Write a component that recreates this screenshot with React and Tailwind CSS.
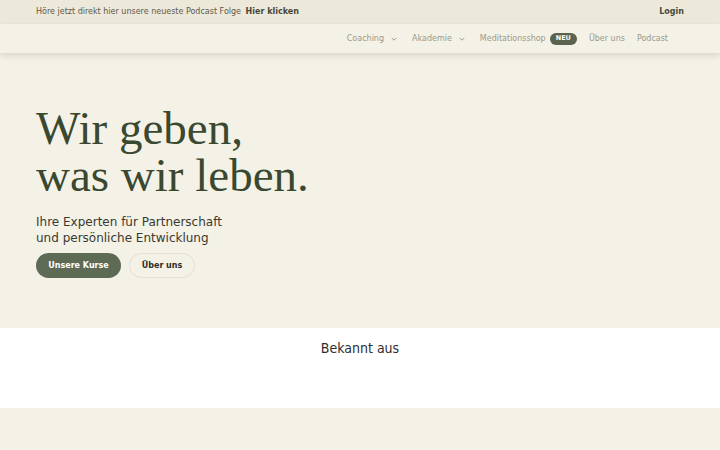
import React from "react";

const sans = { fontFamily: '"DejaVu Sans", sans-serif' };

function Chevron() {
  return (
    <svg width="8" height="8" viewBox="0 0 10 10" className="ml-1.5 mr-0.5" fill="none" stroke="currentColor" strokeWidth="1.2" strokeLinecap="round" strokeLinejoin="round">
      <path d="M2.5 4 L5 6.5 L7.5 4" />
    </svg>
  );
}

function TopBar() {
  return (
    <div className="h-6 bg-[#ece8da] flex items-center justify-between pl-9 pr-9 text-[8px]" style={sans}>
      <div className="text-[#5c5a4e]">
        Höre jetzt direkt hier unsere neueste Podcast Folge <span className="font-bold text-[#4a483c] ml-0.5">Hier klicken</span>
      </div>
      <div className="font-bold text-[#4a483c]">Login</div>
    </div>
  );
}

function NavBar() {
  return (
    <div className="relative z-10 h-[29px] bg-[#f4f1e6] flex items-center justify-end pr-[52px] shadow-[0_3px_6px_rgba(120,110,80,0.18)] text-[8px] text-[#9c9a88]" style={sans}>
      <div className="flex items-center gap-3">
        <div className="flex items-center">Coaching<Chevron /></div>
        <div className="flex items-center">Akademie<Chevron /></div>
        <div className="flex items-center">
          Meditationsshop
          <span className="ml-1 h-3 px-1.5 rounded-full bg-[#5b634f] text-white font-bold text-[6.5px] flex items-center">NEU</span>
        </div>
        <div>Über uns</div>
        <div>Podcast</div>
      </div>
    </div>
  );
}

function Hero() {
  return (
    <div className="bg-[#f4f1e7] pt-[52px] pb-[50px] pl-9">
      <h1 className="text-[47px] leading-[47px] text-[#3a4830]" style={{ fontFamily: '"Liberation Serif", serif' }}>
        Wir geben,
        <br />
        was wir leben.
      </h1>
      <p className="mt-[15px] text-[12px] leading-4 text-[#3a3a30]" style={sans}>
        Ihre Experten für Partnerschaft
        <br />
        und persönliche Entwicklung
      </p>
      <div className="mt-[7px] flex gap-2 text-[8px] font-bold" style={sans}>
        <button className="h-[25px] w-[85px] rounded-full bg-[#5d6a54] text-white">Unsere Kurse</button>
        <button className="h-[25px] w-[66px] rounded-full border border-[#e4dfcf] text-[#2e2e26]">Über uns</button>
      </div>
    </div>
  );
}

function Press() {
  return (
    <div className="bg-white h-20 flex justify-center pt-[10px]">
      <div className="text-[14px] leading-5 text-[#2e2e2e] h-5" style={{ fontFamily: '"DejaVu Sans Condensed", "DejaVu Sans", sans-serif', fontStretch: "condensed" }}>
        Bekannt aus
      </div>
    </div>
  );
}

function Teaser() {
  return (
    <div className="bg-[#f4f1e7] pt-[34px] pb-10 flex justify-center">
      <h2 className="text-[40px] leading-[48px] text-[#faf8f1]" style={{ fontFamily: '"Liberation Serif", serif' }}>
        Liebe, Achtsamkeit und Meditation
      </h2>
    </div>
  );
}

export default function App() {
  return (
    <div className="w-full min-h-screen bg-[#f4f1e7] overflow-hidden">
      <TopBar />
      <NavBar />
      <Hero />
      <Press />
      <Teaser />
    </div>
  );
}
